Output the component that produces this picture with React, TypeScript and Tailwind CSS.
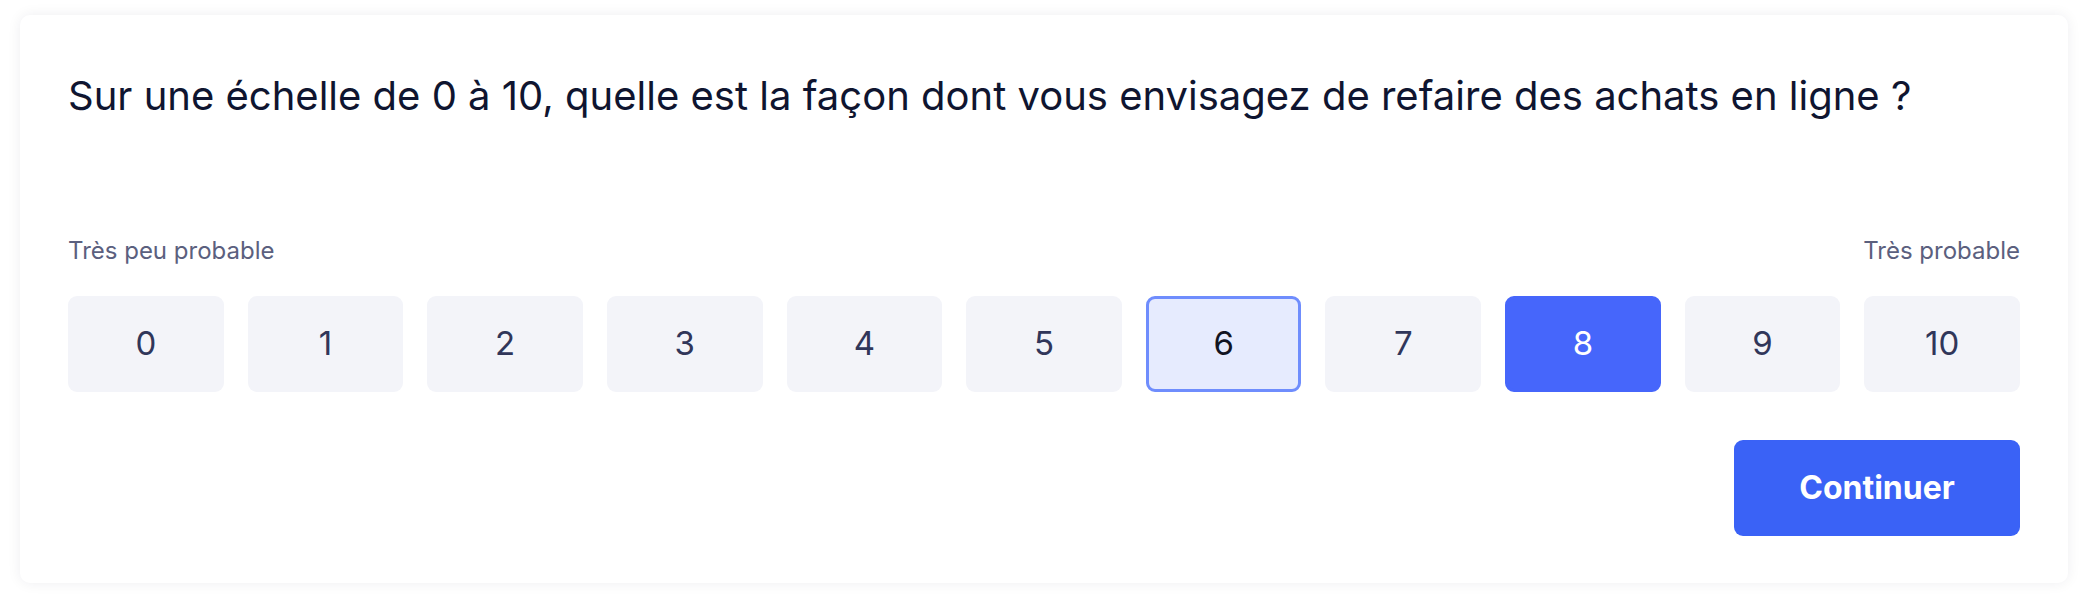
import React, { useState } from 'react';

const scores = [0, 1, 2, 3, 4, 5, 6, 7, 8, 9, 10];

function ScoreTile({ value, selected, hovered }: { value: number; selected: boolean; hovered: boolean }) {
  let cls = 'bg-[#f3f4f9] text-[#30365a] border-[3px] border-transparent';
  if (selected) cls = 'bg-[#4666fb] text-white border-[3px] border-[#4666fb]';
  else if (hovered) cls = 'bg-[#e6ebfe] text-[#111322] border-[3px] border-[#6f8dfd]';

  return (
    <button className={`flex-1 h-[96px] rounded-[9px] flex items-center justify-center text-[33px] ${cls}`}>
      {value}
    </button>
  );
}

export default function App() {
  const [selected] = useState(8);
  const hovered = 6;

  return (
    <div className="w-[2088px] h-[608px] bg-white pt-[15px] pl-[20px] pr-[20px] font-['Inter',sans-serif]">
      <div className="bg-white rounded-[10px] shadow-[0_0_14px_rgba(20,30,60,0.07)] px-[48px] pt-[55px] pb-[47px]">
        <h1 className="text-[40px] leading-[52px] text-[#0f1530] font-normal">
          Sur une échelle de 0 à 10, quelle est la façon dont vous envisagez de refaire des achats en ligne ?
        </h1>

        <div className="mt-[111px] flex justify-between text-[24px] leading-[36px] text-[#5b607e]">
          <span>Très peu probable</span>
          <span>Très probable</span>
        </div>

        <div className="mt-[27px] flex gap-[24px]">
          {scores.map((s) => (
            <ScoreTile key={s} value={s} selected={s === selected} hovered={s === hovered} />
          ))}
        </div>

        <div className="mt-[48px] flex justify-end">
          <button className="w-[286px] h-[96px] rounded-[9px] bg-[#3a62f6] text-white text-[32px] font-bold">
            Continuer
          </button>
        </div>
      </div>
    </div>
  );
}
